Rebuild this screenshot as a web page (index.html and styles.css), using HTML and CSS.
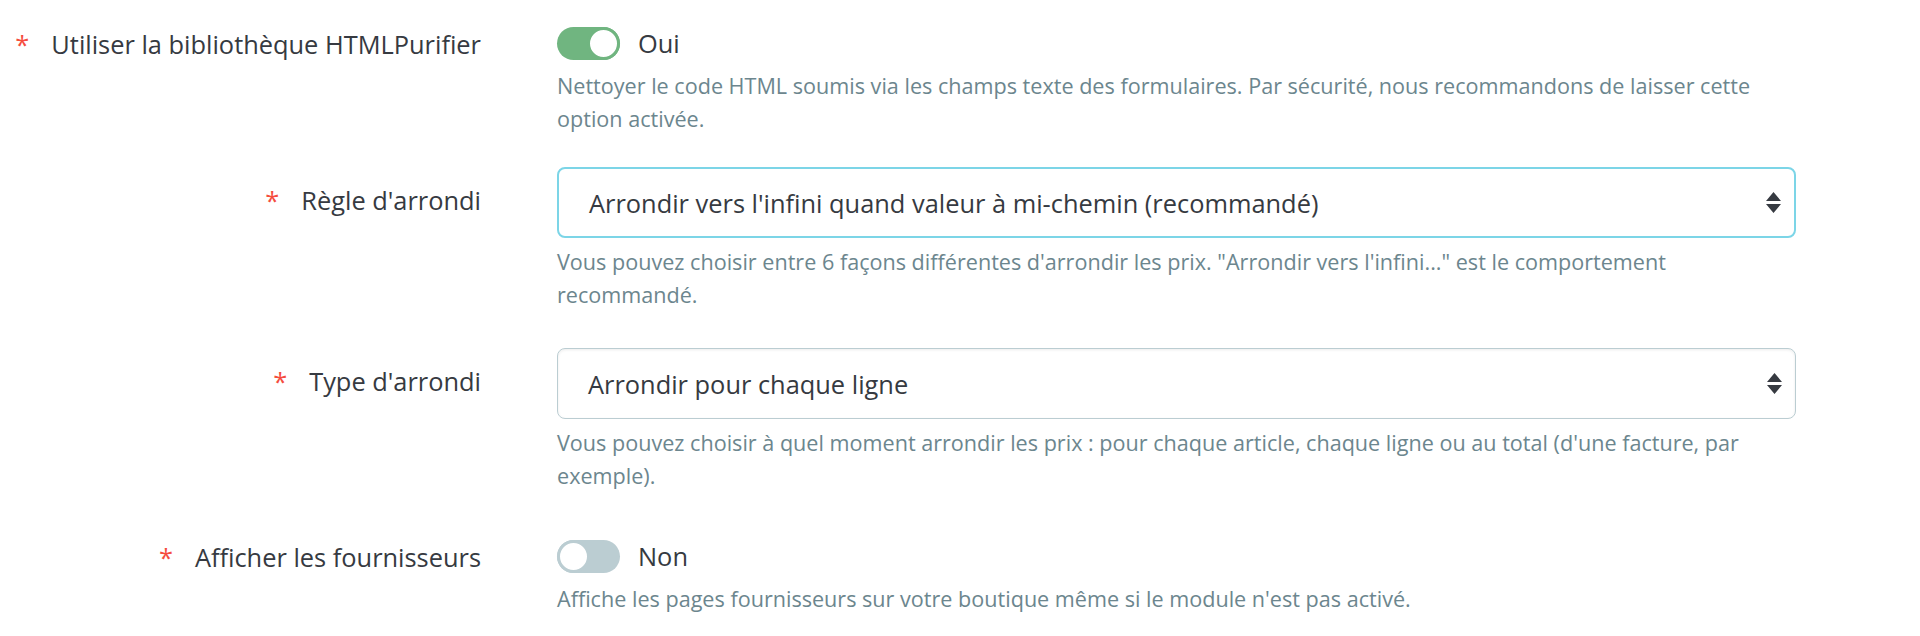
FILE: index.html
```html
<!DOCTYPE html>
<html lang="fr">
<head>
    <meta charset="UTF-8">
    <title>Préférences</title>
    <link rel="stylesheet" href="styles.css">
</head>
<body>
    <main class="form">
        <div class="form-row toggle-row">
            <label class="form-label"><span class="required">*</span>Utiliser la bibliothèque HTMLPurifier</label>
            <div class="form-control">
                <div class="switch-line">
                    <span class="switch on"><span class="knob"></span></span>
                    <span class="switch-text">Oui</span>
                </div>
                <p class="help">Nettoyer le code HTML soumis via les champs texte des formulaires. Par sécurité, nous recommandons de laisser cette option activée.</p>
            </div>
        </div>

        <div class="form-row select-row">
            <label class="form-label"><span class="required">*</span>Règle d'arrondi</label>
            <div class="form-control">
                <div class="select focus">
                    <span>Arrondir vers l'infini quand valeur à mi-chemin (recommandé)</span>
                    <svg class="sort" width="15" height="21" viewBox="0 0 15 21"><path d="M7.5 0 15 9H0z M0 12h15l-7.5 9z" fill="#363a41"/></svg>
                </div>
                <p class="help">Vous pouvez choisir entre 6 façons différentes d'arrondir les prix. "Arrondir vers l'infini..." est le comportement recommandé.</p>
            </div>
        </div>

        <div class="form-row select-row last-select">
            <label class="form-label"><span class="required">*</span>Type d'arrondi</label>
            <div class="form-control">
                <div class="select">
                    <span>Arrondir pour chaque ligne</span>
                    <svg class="sort" width="15" height="21" viewBox="0 0 15 21"><path d="M7.5 0 15 9H0z M0 12h15l-7.5 9z" fill="#363a41"/></svg>
                </div>
                <p class="help">Vous pouvez choisir à quel moment arrondir les prix : pour chaque article, chaque ligne ou au total (d'une facture, par exemple).</p>
            </div>
        </div>

        <div class="form-row toggle-row">
            <label class="form-label"><span class="required">*</span>Afficher les fournisseurs</label>
            <div class="form-control">
                <div class="switch-line">
                    <span class="switch off"><span class="knob"></span></span>
                    <span class="switch-text">Non</span>
                </div>
                <p class="help">Affiche les pages fournisseurs sur votre boutique même si le module n'est pas activé.</p>
            </div>
        </div>
    </main>
</body>
</html>
```

FILE: styles.css
```css
body {
    margin: 0;
    background: #fff;
    color: #363a41;
    font-family: "Open Sans", "Liberation Sans", sans-serif;
}
.form {
    padding-top: 23px;
}
.form-row {
    display: grid;
    grid-template-columns: 481px 1239px;
    column-gap: 76px;
    align-items: start;
}
.toggle-row {
    margin-bottom: 32px;
}
.select-row {
    margin-bottom: 37px;
}
.last-select {
    margin-bottom: 44px;
}
.form-label {
    display: flex;
    justify-content: flex-end;
    align-items: baseline;
    font-size: 25.4px;
    line-height: 40px;
}
.toggle-row .form-label {
    padding-top: 1px;
}
.select-row .form-label {
    padding-top: 13px;
}
.required {
    color: #f54c3e;
    margin-right: 22px;
}
.switch-line {
    display: flex;
    align-items: center;
    height: 40px;
}
.switch {
    position: relative;
    display: inline-block;
    width: 63px;
    height: 33px;
    border-radius: 17px;
}
.switch.on {
    background: #70b580;
}
.switch.off {
    background: #bbcdd2;
}
.knob {
    position: absolute;
    top: 0;
    width: 33px;
    height: 33px;
    box-sizing: border-box;
    border-radius: 50%;
    background: #fff;
    border: 3px solid;
}
.on .knob {
    right: 0;
    border-color: #70b580;
}
.off .knob {
    left: 0;
    border-color: #bbcdd2;
}
.switch-text {
    margin-left: 18px;
    font-size: 25.4px;
}
.help {
    margin: 6px 0 0;
    color: #6c868e;
    font-size: 21.6px;
    line-height: 33px;
}
.select-row .help {
    margin-top: 7px;
}
.select {
    display: flex;
    align-items: center;
    justify-content: space-between;
    height: 71px;
    box-sizing: border-box;
    padding: 0 13px 0 30px;
    border: 1.5px solid #bbcdd2;
    border-radius: 8px;
    box-shadow: inset 0 1px 3px rgba(0, 0, 0, .08);
    font-size: 25.4px;
}
.select.focus {
    border: 2px solid #7cd5e7;
    box-shadow: none;
}
```
